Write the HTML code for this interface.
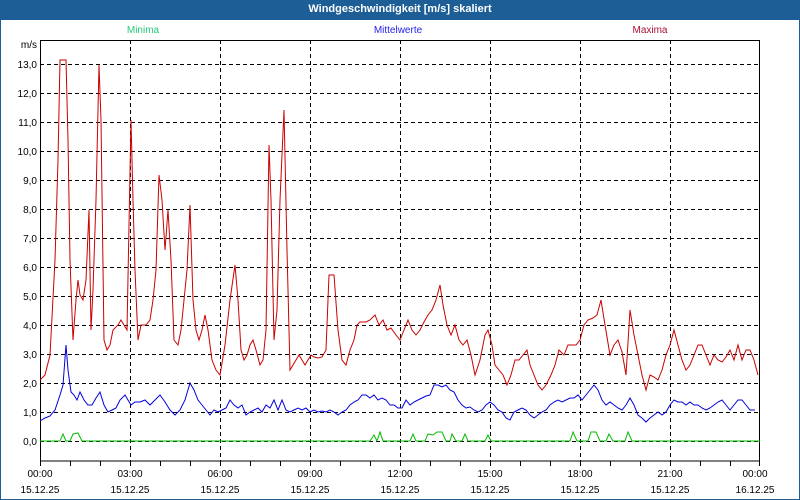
<!DOCTYPE html>
<html><head><meta charset="utf-8"><style>
body{margin:0;width:800px;height:500px;overflow:hidden;background:#fff;font-family:"Liberation Sans",sans-serif}
.win{position:absolute;left:0;top:0;width:798px;height:498px;border:1px solid #1d5e96;}
.tb{position:absolute;left:0;top:0;width:800px;height:20px;background:#1d5e96;color:#fff;font-weight:bold;font-size:11px;text-align:center;line-height:19px}
svg{position:absolute;left:0;top:0}
text{font-family:"Liberation Sans",sans-serif;font-size:10px}
</style></head><body>
<div class="win"></div>
<div class="tb">Windgeschwindigkeit [m/s] skaliert</div>
<svg width="800" height="500">
<text x="143" y="33" fill="#22cc77" text-anchor="middle">Minima</text>
<text x="398" y="33" fill="#2222ee" text-anchor="middle">Mittelwerte</text>
<text x="650" y="33" fill="#aa1133" text-anchor="middle">Maxima</text>
<text x="37" y="48" text-anchor="end">m/s</text>
<g stroke="#000" stroke-width="1" stroke-dasharray="4,3" fill="none">
<path d="M40 441.5H760M40 412.5H760M40 383.5H760M40 354.5H760M40 325.5H760M40 296.5H760M40 267.5H760M40 238.5H760M40 209.5H760M40 180.5H760M40 151.5H760M40 122.5H760M40 93.5H760M40 64.5H760"/>
<path d="M130.5 40V461M220.5 40V461M310.5 40V461M400.5 40V461M490.5 40V461M580.5 40V461M670.5 40V461"/>
</g>
<rect x="40.5" y="40.5" width="719" height="420.5" fill="none" stroke="#000"/>
<g stroke="#000"><path d="M70.5 461v5M100.5 461v5M130.5 461v5M160.5 461v5M190.5 461v5M220.5 461v5M250.5 461v5M280.5 461v5M310.5 461v5M340.5 461v5M370.5 461v5M400.5 461v5M430.5 461v5M460.5 461v5M490.5 461v5M520.5 461v5M550.5 461v5M580.5 461v5M610.5 461v5M640.5 461v5M670.5 461v5M700.5 461v5M730.5 461v5M40.5 461v5M759.5 461v5"/></g>
<g text-anchor="end">
<text x="37" y="445">0,0</text><text x="37" y="416">1,0</text><text x="37" y="387">2,0</text><text x="37" y="358">3,0</text><text x="37" y="329">4,0</text><text x="37" y="300">5,0</text><text x="37" y="271">6,0</text><text x="37" y="242">7,0</text><text x="37" y="213">8,0</text><text x="37" y="184">9,0</text><text x="37" y="155">10,0</text><text x="37" y="126">11,0</text><text x="37" y="97">12,0</text><text x="37" y="68">13,0</text>
</g>
<g text-anchor="middle">
<text x="40" y="477">00:00</text><text x="40" y="493">15.12.25</text>
<text x="130" y="477">03:00</text><text x="130" y="493">15.12.25</text>
<text x="220" y="477">06:00</text><text x="220" y="493">15.12.25</text>
<text x="310" y="477">09:00</text><text x="310" y="493">15.12.25</text>
<text x="400" y="477">12:00</text><text x="400" y="493">15.12.25</text>
<text x="490" y="477">15:00</text><text x="490" y="493">15.12.25</text>
<text x="580" y="477">18:00</text><text x="580" y="493">15.12.25</text>
<text x="670" y="477">21:00</text><text x="670" y="493">15.12.25</text>
<text x="755" y="477">00:00</text><text x="755" y="493">16.12.25</text>
</g>
<polyline fill="none" stroke="#00bb00" stroke-width="1" points="40,441 60,441 63,434 66,441 70,441 73,434 78,433 82,441 370,441 374,435 377,441 380,432 383,441 410,441 413,434 416,441 425,441 428,434 433,435 437,432 442,432 446,441 450,441 452,434 456,441 462,441 465,434 468,441 485,441 488,435 491,441 570,441 573,432 577,441 588,441 591,432 596,432 600,441 606,441 609,434 613,441 625,441 628,432 632,441 760,441"/>
<polyline fill="none" stroke="#0000dd" stroke-width="1" points="40,421 45,418 50,416 55,410 60,395 63,385 66,345 68,370 71,392 74,395 77,400 80,392 84,400 88,405 92,405 96,398 100,392 104,405 108,412 112,410 116,408 120,400 125,395 128,400 131,405 135,402 140,402 145,400 150,405 155,400 160,395 165,402 170,410 175,415 180,410 185,400 190,383 194,390 198,400 202,405 206,410 210,415 214,410 218,412 222,410 226,408 230,400 234,405 238,408 242,405 246,415 250,412 254,410 258,408 262,412 266,405 270,408 274,400 278,410 282,400 286,410 290,412 294,410 298,408 302,410 306,408 310,412 314,410 318,412 322,411 326,412 330,410 334,412 338,415 342,412 346,410 350,405 354,402 358,400 362,395 366,395 370,398 374,395 378,400 382,398 386,400 390,405 394,405 398,408 402,408 406,400 410,405 414,402 418,400 422,398 426,396 430,395 434,385 438,385 442,387 446,385 450,390 454,392 458,400 462,405 466,408 470,407 474,410 478,412 482,410 486,405 490,402 494,405 498,410 502,412 506,418 510,420 514,412 518,410 522,408 526,410 530,415 534,418 538,415 542,412 546,410 550,405 554,402 558,400 562,402 566,400 570,398 574,398 578,395 582,400 586,395 590,390 594,385 598,390 602,400 606,405 610,402 614,405 618,408 622,410 626,405 630,398 634,405 638,415 642,418 646,422 650,418 654,415 658,412 662,415 666,412 670,405 674,400 678,402 682,402 686,405 690,402 694,405 698,405 702,408 706,410 710,408 714,405 718,402 722,400 726,405 730,410 734,405 738,400 742,400 746,405 750,410 755,410"/>
<polyline fill="none" stroke="#cc0000" stroke-width="1" points="40,380 45,375 50,355 55,260 58,160 60,60 66,60 68,140 70,260 73,340 76,300 78,280 80,295 83,300 86,280 89,210 91,330 93,290 96,200 99,65 101,120 104,340 107,350 110,345 113,330 118,325 121,320 124,325 127,330 131,120 133,200 135,270 138,340 141,325 146,325 150,320 153,300 156,270 159,175 162,200 165,250 168,210 171,260 174,340 178,345 181,330 184,300 187,270 190,205 193,300 196,330 199,340 202,330 205,315 208,330 212,360 216,370 220,375 225,345 230,300 235,265 238,300 241,350 244,360 247,355 250,345 253,340 256,350 260,365 263,360 266,330 269,145 271,200 274,340 277,310 280,200 284,110 287,250 290,370 293,365 296,360 299,355 302,360 305,365 308,360 311,355 314,357 318,358 322,357 326,350 329,275 334,275 338,330 342,360 346,365 350,350 354,340 357,325 360,322 366,322 370,320 375,315 379,325 383,320 387,330 391,328 396,335 400,340 404,330 408,320 412,330 416,335 420,330 424,322 428,315 432,310 436,300 440,285 443,305 447,325 451,335 455,325 459,340 463,345 467,340 471,355 475,375 480,360 485,335 488,330 492,345 495,365 499,370 503,375 507,385 511,375 515,360 519,360 523,355 527,350 530,365 534,375 538,385 542,390 546,385 551,375 555,365 559,350 564,355 568,345 572,345 576,345 580,340 584,325 588,320 593,318 597,315 601,300 605,325 610,355 614,345 618,340 622,352 626,375 630,310 634,335 638,355 642,375 646,390 650,375 654,377 658,380 662,370 666,355 670,345 674,330 678,345 682,360 686,370 690,365 694,355 698,345 702,345 706,355 710,365 714,355 718,360 722,362 726,357 730,350 734,360 738,345 742,360 746,350 750,350 754,360 758,375"/>
</svg>
</body></html>
